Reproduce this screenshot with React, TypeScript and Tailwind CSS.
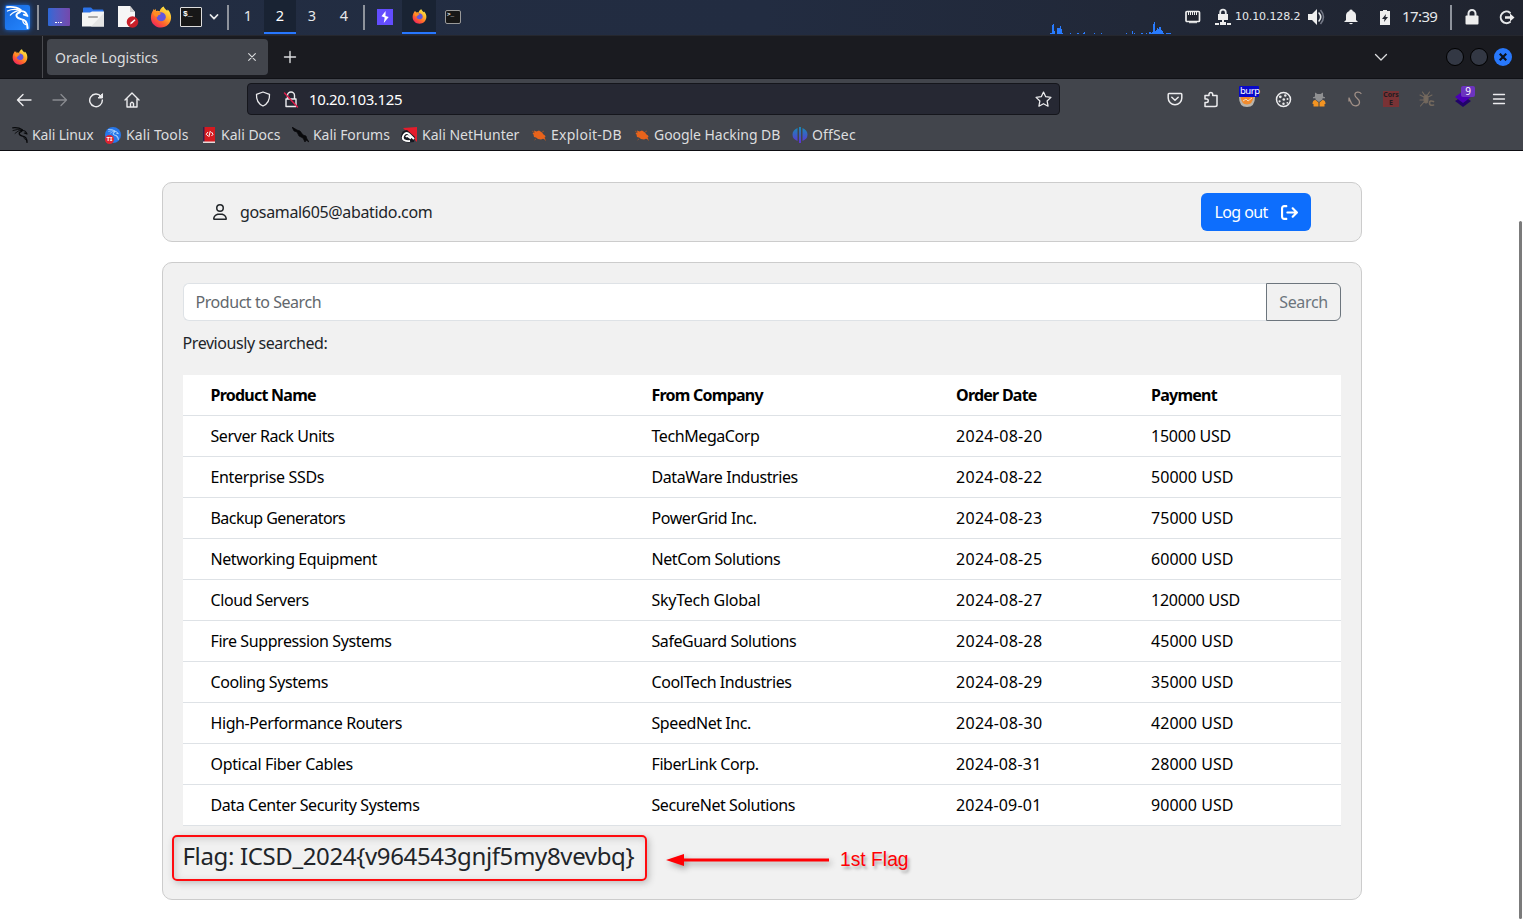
import React from "react";
import { FaRegUser, FaArrowRightFromBracket } from "react-icons/fa6";

type CellProps = { w: string; children?: React.ReactNode; className?: string };

/** Fixed-width, centred slot used by the desktop panel and the toolbars. */
function Cell({ w, children, className = "" }: CellProps) {
  return <div className={`flex h-full shrink-0 items-center justify-center ${w} ${className}`}>{children}</div>;
}

function Sep() {
  return <div className="h-[25px] w-[2px] shrink-0 bg-[#8e939c]" />;
}

function Dragon({ size, color }: { size: number; color: string }) {
  return (
    <svg width={size} height={size} viewBox="0 0 24 24" fill="none" stroke={color} strokeLinecap="round" strokeLinejoin="round">
      <path d="M1 1.200Q10 .2 15.500 4.200" strokeWidth="1.800" />
      <path d="M1.500 5.200Q8 2.500 14.500 4.500M4.500 9.500Q8.500 5 15 4.800" strokeWidth="1.300" />
      <path d="M14 5.500q5-1 7 2.300l1.500 2.700-4-1.500" strokeWidth="1.800" />
      <path d="M14.500 6.500Q9.500 8 11.500 11.500c1.500 2.800 6.500 1.500 9 4.500q2 3 2 7" strokeWidth="2.100" />
      <path d="M17.500 15q0 3 3.500 4.500" strokeWidth="1.200" />
    </svg>
  );
}

function Firefox({ size }: { size: number }) {
  return (
    <svg width={size} height={size} viewBox="0 0 24 24">
      <defs>
        <linearGradient id="fox" x1="0.85" y1="0.05" x2="0.2" y2="0.95">
          <stop offset="0" stopColor="#fff04a" />
          <stop offset="0.35" stopColor="#ffb32c" />
          <stop offset="0.65" stopColor="#ff6a2a" />
          <stop offset="1" stopColor="#f2235c" />
        </linearGradient>
      </defs>
      <path d="M15 .5c.5 2 2 3 3.800 4.800l.5-1.500c2.500 2.500 4 5.700 3.700 9.400C22.600 19.300 18 23.500 12 23.500S1 19 1 12.700C1 9.500 2 7 3.300 5l.6-1.700.9 1.400L6 3l.6 2.500q2-.8 4 .2C11 3.500 12.500 1.500 15 .5z" fill="url(#fox)" />
      <path d="M8.500 8.500q2-2.500 5-1.500 4 1.500 3.700 5.200c-.3 3-2.700 4.300-5.200 4.300-3 0-4.800-2-4.800-4.500z" fill="#6256dd" />
      <path d="M3.500 8q2-3 5.500-1.700l3 2.200q-1 1.500-3 1.700L8 12l-3-1z" fill="#ff8c22" />
    </svg>
  );
}

const line = { fill: "none", stroke: "currentColor", strokeLinecap: "round", strokeLinejoin: "round" } as const;

const spikes = [
  [0, 1], [1, 1], [2, 9], [3, 10], [4, 3], [7, 6], [8, 6], [9, 6], [10, 8], [11, 5], [12, 1], [20, 1],
  [27, 1], [28, 1], [33, 1], [34, 2], [44, 1], [51, 1], [76, 1], [82, 3], [84, 1], [91, 1], [92, 1],
  [96, 1], [99, 2], [100, 2], [101, 1], [102, 2], [103, 10], [104, 12], [105, 3], [106, 4], [107, 6], [108, 5],
  [109, 7], [110, 7], [111, 4], [112, 3], [113, 1], [116, 1], [117, 1], [118, 1], [119, 1], [120, 1],
];

function Panel() {
  return (
    <div className="flex h-[35px] w-full shrink-0 items-center bg-linear-to-r from-[#222d42] via-[#222c41] to-[#20242f] pb-px text-[#e6e8ea]">
      <Cell w="w-[37px]" className="pr-[3px]">
        <div className="flex size-[25px] items-center justify-center rounded-[2px] bg-linear-to-br from-[#1768de] to-[#2587ff] shadow-[0_0_5px_#176be0]">
          <Dragon size={23} color="#fff" />
        </div>
      </Cell>
      <Sep />
      <Cell w="w-[41px]" className="pr-[2px]">
        <div className="flex h-[18px] w-[22px] items-end justify-center gap-px rounded-[1px] bg-linear-to-r from-[#2c68d6] to-[#7448ac] pb-[3px]">
          <i className="size-[1.5px] bg-white" /><i className="size-[1.5px] bg-white" /><i className="size-[1.5px] bg-white" />
        </div>
      </Cell>
      <Cell w="w-[26px]">
        <svg width="22" height="20" viewBox="0 0 22 20">
          <path d="M1 1.500Q1 .5 2 .5h7l2 2h9.500q1 0 1 1V7H1z" fill="#2b72e8" />
          <path d="M0 5.500h8l2-1h12v15H0z" fill="#f4f4f4" /><path d="M22 6v13.500H9z" fill="#e4e4e4" />
          <rect x="6" y="9" width="10" height="2" rx="1" fill="#aaa" />
        </svg>
      </Cell>
      <Cell w="w-[43px]" className="pl-[1px]">
        <svg width="22" height="22" viewBox="0 0 22 22">
          <path d="M1 0h12l5 6v15H1z" fill="#f6f6f6" /><path d="M13 0v6h5z" fill="#ccc" />
          <circle cx="15.500" cy="16" r="5.800" fill="#c9202a" /><path d="m13 18.500 1-2.200 3.500-3 1 1-3.500 3.200z" fill="#fff" />
        </svg>
      </Cell>
      <Cell w="w-[25px]" className="pr-[2px]"><Firefox size={22} /></Cell>
      <Cell w="w-[34px]">
        <div className="h-[20px] w-[22px] rounded-[1px] border border-[#ddd] bg-[#171717] pl-[2px] font-['Liberation_Mono',monospace] text-[8px] leading-[12px] font-bold text-white">$_</div>
      </Cell>
      <Cell w="w-[12px]">
        <svg width="10" height="10" viewBox="0 0 10 10" {...line} strokeWidth="1.800"><path d="m1.500 3 3.500 3.700L8.500 3" /></svg>
      </Cell>
      <Cell w="w-[7px]" />
      <Sep />
      <Cell w="w-[3px]" />
      {["1", "2", "3", "4"].map((n) => (
        <Cell key={n} w="w-[32px]" className={`text-[14.500px] ${n === "2" ? "border-b-2 border-[#2777ff] bg-[#192333] text-white" : "pb-[2px]"}`}>{n}</Cell>
      ))}
      <Cell w="w-[3px]" />
      <Sep />
      <Cell w="w-[3px]" />
      <Cell w="w-[34px]">
        <div className="flex size-4 items-center justify-center bg-[#634dff]">
          <svg width="10" height="14" viewBox="0 0 10 14"><path d="M5.600 1 1.500 6.300l3.200 1.200L3.800 13l4.900-6-3.200-1z" fill="#fff" /></svg>
        </div>
      </Cell>
      <Cell w="w-[34px]" className="border-b-2 border-[#2777ff] bg-[#192333] pt-[1px]"><Firefox size={15} /></Cell>
      <Cell w="w-[34px]">
        <div className="h-[14px] w-[16px] rounded-[2px] border border-[#999] bg-[#171717] pl-[1px] font-['Liberation_Mono',monospace] text-[6px] leading-[7px] font-bold text-white">&gt;_</div>
      </Cell>
      <div className="flex-1" />
      <svg className="self-end" width="122" height="14" viewBox="0 0 122 14">
        {spikes.map(([x, h]) => <rect key={x} x={x} y={14 - h} width="1" height={h} fill="#287bff" />)}
      </svg>
      <Cell w="w-[41px]">
        <svg width="16" height="14" viewBox="0 0 16 14"><rect x="1" y="1.500" width="13.500" height="10" rx="1" fill="#20242f" stroke="#eee" strokeWidth="1.700" /><path d="M3.500 2v3M5.500 2v3M7.500 2v3M9.500 2v3M11.500 2v3M4 12.700h8" stroke="#eee" /></svg>
      </Cell>
      <Cell w="w-[20px]">
        <svg width="16" height="18" viewBox="0 0 16 18"><path d="M5.200 7V4.500a2.800 2.800 0 0 1 5.600 0V7" {...line} strokeWidth="1.800" /><path d="M3 6h10v6H3zM0 15h4v2H0zM5 14h2v-2h2v2h2v3H5zM12 15h4v2h-4z" fill="#eee" /></svg>
      </Cell>
      <div className="ml-[2px] w-[66px] shrink-0 font-['DejaVu_Sans',sans-serif] text-[11px] tracking-[-0.1px]">10.10.128.2</div>
      <Cell w="w-[32px]" className="pr-px">
        <svg width="17" height="18" viewBox="0 0 17 18"><path d="M0 6h4l5-5v16l-5-5H0z" fill="#eee" /><path d="M11 5q3.500 4 0 8" {...line} strokeWidth="1.600" /><path d="M12.500 2q6 7 0 14" fill="none" stroke="#747986" strokeWidth="1.500" /></svg>
      </Cell>
      <Cell w="w-[36px]">
        <svg width="16" height="16" viewBox="0 0 16 16"><path d="M1 13h14l-2-2V6.500Q13 3 9.500 2V1Q8 0 6.500 1v1Q3 3 3 6.500V11zM6 14h4q-2 2.500-4 0" fill="#eee" /></svg>
      </Cell>
      <Cell w="w-[32px]">
        <svg width="10" height="15" viewBox="0 0 10 15"><path d="M3 0h4v1h3v14H0V1h3z" fill="#eee" /><path d="M6 4 2 9h2.500L4 12l4-5H5.500z" fill="#20242f" /></svg>
      </Cell>
      <div className="ml-px w-[48px] shrink-0 pb-px text-[15px] tracking-[-0.6px]">17:39</div>
      <Sep />
      <Cell w="w-[40px]">
        <svg width="14" height="16" viewBox="0 0 14 16"><path d="M3.500 7V4.500a3.500 3.500 0 0 1 7 0V7" {...line} strokeWidth="2" /><rect y="6.500" x=".5" width="13" height="9" rx="1" fill="#eee" /></svg>
      </Cell>
      <Cell w="w-[31px]" className="pr-[2px]">
        <svg width="16" height="15" viewBox="0 0 16 15"><path d="M11 2.700A5.800 5.800 0 1 0 11 12" {...line} strokeWidth="2" /><path d="M6 6.300h5V3.500l4.500 4-4.500 4V8.700H6z" fill="#eee" /></svg>
      </Cell>
    </div>
  );
}

function TabStrip() {
  return (
    <div className="flex h-[44px] w-full shrink-0 items-center border-t border-b border-t-[#25272e] border-b-[#101116] bg-[#1a1b20] text-[#dcdddf]">
      <Cell w="w-[42px]" className="pr-[2px]"><Firefox size={16} /></Cell>
      <div className="h-full w-px bg-[#4a4b50]" />
      <div className="ml-1 flex h-[36px] w-[221px] items-center justify-between rounded-[4px] bg-[#42454c] pr-[11px] pl-2">
        <span className="text-[14px]">Oracle Logistics</span>
        <svg width="10" height="10" viewBox="0 0 12 12" {...line} strokeWidth="1.300"><path d="m2 2 8 8M10 2l-8 8" /></svg>
      </div>
      <Cell w="w-[43px]"><svg width="14" height="14" viewBox="0 0 14 14" {...line} strokeWidth="1.400"><path d="M7 1.500v11M1.500 7h11" /></svg></Cell>
      <div className="flex-1" />
      <Cell w="w-[16px]"><svg width="14" height="14" viewBox="0 0 14 14" {...line} strokeWidth="1.300"><path d="m1.500 4.500 5.500 5.500 5.500-5.500" /></svg></Cell>
      <div className="mr-[11px] ml-[57px] flex gap-[6px]">
        <div className="size-[18px] rounded-full border border-black bg-[#333844]" />
        <div className="size-[18px] rounded-full border border-black bg-[#333844]" />
        <div className="flex size-[18px] items-center justify-center rounded-full bg-[#2878fb]">
          <svg width="8" height="8" viewBox="0 0 8 8" stroke="#0d121c" strokeWidth="2.200"><path d="m.7.7 6.600 6.600M7.300.7.700 7.300" /></svg>
        </div>
      </div>
    </div>
  );
}

function Toolbar() {
  return (
    <div className="flex h-[40px] w-full shrink-0 items-center bg-[#42454c] text-[#ececee]">
      <Cell w="w-[6px]" />
      <Cell w="w-[36px]"><svg className="mt-px" width="16" height="16" viewBox="0 0 16 16" {...line} strokeWidth="1.400"><path d="M15 8H1.500M7 2.500 1.500 8 7 13.500" /></svg></Cell>
      <Cell w="w-[36px]" className="text-[#898b90]"><svg className="mt-px" width="16" height="16" viewBox="0 0 16 16" {...line} strokeWidth="1.300"><path d="M1 8h13.500M9 2.500 14.500 8 9 13.500" /></svg></Cell>
      <Cell w="w-[36px]"><svg className="mt-px" width="16" height="16" viewBox="0 0 16 16" {...line} strokeWidth="1.400"><path d="M13 4.500A6.300 6.300 0 1 0 14.300 8" /><path d="M14.500 2v4h-4z" fill="currentColor" strokeWidth="1" /></svg></Cell>
      <Cell w="w-[36px]" className="pr-px"><svg className="mt-px" width="16" height="16" viewBox="0 0 16 16" {...line} strokeWidth="1.400"><path d="m1 8 7-7 7 7M3 7v8h10V7M6.500 15v-3.500q1.500-2.500 3 0V15" /></svg></Cell>
      <div className="ml-[97px] flex h-[32px] w-[813px] items-center rounded-[4px] border border-[#15161c] bg-[#262833] px-[7px]">
        <svg width="16" height="16" viewBox="0 0 16 16" {...line} strokeWidth="1.300"><path d="M8 1 1.500 3.300Q1 12 8 15q7-3 6.500-11.700z" /></svg>
        <svg className="ml-[12px]" width="16" height="17" viewBox="0 0 16 17" {...line} strokeWidth="1.400"><path d="M4.500 8V4.500a3.500 3.500 0 0 1 7 0V8M3 8h10v7.500H3z" /><path d="m1.500 2 13 14" stroke="#e21c4c" /></svg>
        <span className="ml-[10px] flex-1 text-[15px] tracking-[-0.36px] text-white">10.20.103.125</span>
        <svg width="17" height="17" viewBox="0 0 16 16" {...line} strokeWidth="1.200"><path d="m8 1 2.100 4.400 4.900.6-3.600 3.400.9 4.900L8 12l-4.300 2.300.9-4.900L1 6l4.900-.6z" /></svg>
      </div>
      <div className="flex-1" />
      <div className="mr-[6px] flex h-full">
        <Cell w="w-[36px]"><svg width="16" height="16" viewBox="0 0 16 16" {...line} strokeWidth="1.500"><path d="M2 2.500h12q.8 0 .8 1V7a6.800 6.800 0 0 1-13.600 0V3.500q0-1 .8-1zM4.800 6.300 8 9.300l3.200-3" /></svg></Cell>
        <Cell w="w-[36px]"><svg width="16" height="18" viewBox="0 0 16 18" {...line} strokeWidth="1.500"><path d="M2 16.500h10q2 0 2-1.500V5.500H9.700V4a1.900 1.900 0 0 0-3.700 0v1.500H2V9h1.500a1.700 1.700 0 0 1 0 3.500H2z" /></svg></Cell>
        <Cell w="w-[36px]" className="items-start pt-[7px] pl-[4px]">
          <div className="flex flex-col items-center">
            <div className="z-10 h-[11px] w-[20px] rounded-[1px] bg-[#0808ca] pl-px text-[9.500px] leading-[10px] tracking-[-0.5px] text-white">burp</div>
            <svg className="mr-[4px]" width="18" height="10" viewBox="0 0 18 10"><path d="M1 0h16q0 10-8 10T1 0" fill="#b8b4ac" /><path d="M2.500 0h13q-1 7.500-6.500 7.500T2.500 0" fill="#f18b2d" /><path d="m5 4 3-2 2 2 4-3" stroke="#f5d9b8" fill="none" /></svg>
          </div>
        </Cell>
        <Cell w="w-[36px]"><svg width="17" height="17" viewBox="0 0 17 17"><circle cx="8.500" cy="8.500" r="7" {...line} strokeWidth="1.500" /><g fill="#e7e7e7"><circle cx="5.300" cy="5.800" r="1.400" /><circle cx="10.300" cy="4.500" r="1.200" /><circle cx="4.600" cy="10.300" r="1.100" /><circle cx="8.800" cy="8.500" r="1.300" /><circle cx="12.500" cy="8" r="1" /><circle cx="8.500" cy="12.800" r="1.200" /><circle cx="12.300" cy="11.800" r=".9" /></g></svg></Cell>
        <Cell w="w-[36px]"><svg width="14" height="16" viewBox="0 0 14 16"><path d="M3 5.500V1.500L5.500 3h3L11 1.500v4l2 .8v1H1v-1zM3.500 7h7v1.500L7 11 3.500 8.500z" fill="#8f9092" /><path d="M3.500 9 6.500 11.500V15.500H1.500V13H.5q0-4 3-4M10.500 9l-3 2.500v4h5V13h1q0-4-3-4" fill="#f39422" /></svg></Cell>
        <Cell w="w-[36px]" className="text-[#a19087]"><svg width="14" height="16" viewBox="0 0 14 16" {...line} strokeWidth="1.300"><path d="M13 2.500Q12 1 9.500 1.200 6.500 1.600 7 4.500c.5 2.700 4.500 3 4.500 6.500 0 4.500-6 5-8 1.500L1 7v3" /></svg></Cell>
        <Cell w="w-[36px]"><div className="size-4 bg-[#793235] text-center text-[7px] leading-[8px] font-bold text-[#221c20]">Cors<br />E</div></Cell>
        <Cell w="w-[36px]" className="text-[#74695e]"><svg width="16" height="16" viewBox="0 0 16 16" {...line} strokeWidth="1.100"><ellipse cx="7" cy="8" rx="2" ry="4" fill="currentColor" /><path d="m5.500 4-2-3M8.500 4l2-3M5 6 1 4M9 6l4-2M5 9H1M5 11l-3.500 4" /><path d="M14.500 10.500q-4-1.500-4 1.500t4 2" strokeWidth="1.700" /></svg></Cell>
        <Cell w="w-[36px]" className="relative"><svg width="16" height="16" viewBox="0 0 16 16"><path d="m0 10 8-5 8 5-8 6z" fill="#210469" /><path d="m0 6 8-6 8 6-8 6z" fill="#4b00b4" /></svg><span className="absolute top-[7px] left-[16px] h-[11px] w-[14px] rounded-[2px] bg-[#6c34bf] text-center text-[10px] leading-[11px] text-white">9</span></Cell>
        <Cell w="w-[36px]"><svg width="14" height="14" viewBox="0 0 14 14" {...line} strokeWidth="1.300"><path d="M1.500 2.500h11M1.500 7h11M1.500 11.500h11" /></svg></Cell>
      </div>
    </div>
  );
}

function Label({ w, children }: { w: string; children: React.ReactNode }) {
  return <span className={`shrink-0 whitespace-nowrap text-[14px] ${w}`}>{children}</span>;
}

function ExploitIcon() {
  return <svg width="16" height="16" viewBox="0 0 16 16"><path d="M2.500 7.500 1.500 6l2-.5L3 3.500l2.500 1L8 3.500 11 5.500l1.500 2 1.500 1 .5 1.500-1 .5 1 2-2.500-.8-2 .8-3-.5-2-1.500L3 10z" fill="#e8631b" /><path d="m1 4 3 2M5 12l-1.500 1M11 5l2-1M13 12l2 1.500" stroke="#b8571f" strokeWidth=".7" /></svg>;
}

function Bookmarks() {
  return (
    <div className="flex h-[32px] w-full shrink-0 items-center border-b border-[#0d0d12] bg-[#42454c] pl-[12px] text-[#dcdddf]">
      <Cell w="w-[20px]" className="justify-start"><Dragon size={16} color="#08090b" /></Cell>
      <Label w="w-[73px] tracking-[-0.15px]">Kali Linux</Label>
      <Cell w="w-[21px]" className="justify-start">
        <div className="relative flex size-4 items-center justify-center rounded-full bg-[#2777ea]"><Dragon size={11} color="#b5d9ff" /><i className="absolute bottom-[-1px] left-0 flex size-[9px] items-center justify-center rounded-full bg-[#df2430] text-[6px] leading-none font-bold text-white not-italic">TI</i></div>
      </Cell>
      <Label w="w-[75px] tracking-[0.1px]">Kali Tools</Label>
      <Cell w="w-[20px]" className="justify-start">
        <svg width="16" height="16" viewBox="0 0 16 16"><path d="M2 0h12v16H2z" fill="#d51a20" /><path d="M2 0h1.500v15H2z" fill="#35204b" /><path d="M2 14.500h12V16H2z" fill="#e6dada" /><path d="M7 5 5.200 7.300 7 9M10.500 5l1.500 2.300L10.500 9M9.300 4l-1.500 6" stroke="#fff" fill="none" /></svg>
      </Cell>
      <Label w="w-[71px]">Kali Docs</Label>
      <Cell w="w-[21px]" className="justify-start"><svg width="17" height="16" viewBox="0 0 17 16"><path d="m0 0 5 3 3 1 3 4 3 1 1 3 2 3-3-2-1 2-2-4-4-2-2-4-3-1z" fill="#08090b" stroke="#08090b" strokeWidth=".7" /></svg></Cell>
      <Label w="w-[88px] tracking-[-0.05px]">Kali Forums</Label>
      <Cell w="w-[21px]" className="justify-start"><svg width="16" height="16" viewBox="0 0 16 16"><path d="m2 1 14-1v15L5 4z" fill="#e51c2b" /><path d="M0 9Q1 3 6 3l8 7-1 5-5 .5Q0 15 0 9" fill="#151820" /><path d="M13 12 8.500 7.500Q5.500 4.500 3 7.500q-2.500 3.500 0 5.500 2.500 1.500 6 1M5 10q1-2 3 0l2 1.500" fill="none" stroke="#fff" strokeWidth="1.900" /></svg></Cell>
      <Label w="w-[109px]">Kali NetHunter</Label>
      <Cell w="w-[20px]" className="justify-start"><ExploitIcon /></Cell>
      <Label w="w-[83px] tracking-[0.25px]">Exploit-DB</Label>
      <Cell w="w-[20px]" className="justify-start"><ExploitIcon /></Cell>
      <Label w="w-[138px] tracking-[-0.05px]">Google Hacking DB</Label>
      <Cell w="w-[20px]" className="justify-start"><svg width="16" height="16" viewBox="0 0 16 16"><defs><linearGradient id="offsec" gradientUnits="userSpaceOnUse" x1="0" y1="0" x2="0" y2="16"><stop stopColor="#188bb5" /><stop offset="1" stopColor="#6031d6" /></linearGradient></defs><path d="M5.500 1v13Q.5 12 .5 7.500T5.500 1M7 0h2v16H7zM10.500 1q5 2 5 6.500t-5 6.500z" fill="url(#offsec)" /></svg></Cell>
      <Label w="w-[60px] tracking-[0.15px]">OffSec</Label>
    </div>
  );
}

const rows = [
  ["Server Rack Units", "TechMegaCorp", "2024-08-20", "15000 USD"],
  ["Enterprise SSDs", "DataWare Industries", "2024-08-22", "50000 USD"],
  ["Backup Generators", "PowerGrid Inc.", "2024-08-23", "75000 USD"],
  ["Networking Equipment", "NetCom Solutions", "2024-08-25", "60000 USD"],
  ["Cloud Servers", "SkyTech Global", "2024-08-27", "120000 USD"],
  ["Fire Suppression Systems", "SafeGuard Solutions", "2024-08-28", "45000 USD"],
  ["Cooling Systems", "CoolTech Industries", "2024-08-29", "35000 USD"],
  ["High-Performance Routers", "SpeedNet Inc.", "2024-08-30", "42000 USD"],
  ["Optical Fiber Cables", "FiberLink Corp.", "2024-08-31", "28000 USD"],
  ["Data Center Security Systems", "SecureNet Solutions", "2024-09-01", "90000 USD"],
];

const bodyTracking = ["tracking-[-0.41px]", "tracking-[-0.42px]", "tracking-[0.29px]", "tracking-[0.04px]"];

function tracking(text: string, column: number) {
  if (text.startsWith("1") && text.endsWith("USD")) return "tracking-[-0.23px]";
  if (text.endsWith("1") && column === 2) return "tracking-[0.2px]";
  if (text === "Enterprise SSDs" || text === "Optical Fiber Cables") return "tracking-[-0.33px]";
  if (text === "Backup Generators") return "tracking-[-0.55px]";
  if (text === "SkyTech Global") return "tracking-[-0.25px]";
  return bodyTracking[column];
}

function Row({ cells, head = false }: { cells: string[]; head?: boolean }) {
  return (
    <div className={`grid h-[41px] grid-cols-[441px_304.500px_195px_1fr] items-center border-b border-[#dee2e6] bg-white pl-[27.500px] text-black ${head ? "font-bold" : ""}`}>
      {cells.map((c, i) => <span key={c} className={head ? "tracking-[-0.76px]" : tracking(c, i)}>{c}</span>)}
    </div>
  );
}

export default function App() {
  return (
    <div className="flex h-[920px] w-[1523px] flex-col overflow-hidden bg-white font-['Noto_Sans',sans-serif]">
      <Panel />
      <TabStrip />
      <Toolbar />
      <Bookmarks />
      <main className="relative flex min-h-0 flex-1 flex-col pt-[31px] pl-[162px] text-[16px] text-[#212529]">
        <header className="flex h-[60px] w-[1200px] shrink-0 items-center rounded-[10px] border border-[#ccc] bg-[#f1f1f1] pr-[50px] pl-[48.500px]">
          <FaRegUser size={16} />
          <span className="ml-[12.500px] flex-1 tracking-[-0.34px]">gosamal605@abatido.com</span>
          <button className="flex h-[38px] w-[110px] items-center justify-between rounded-[6px] bg-[#0d6efd] pr-[13px] pl-[13.500px] tracking-[-0.6px] text-white">Log out<FaArrowRightFromBracket size={17} /></button>
        </header>
        <section className="mt-5 h-[638px] w-[1200px] shrink-0 rounded-[10px] border border-[#ccc] bg-[#f1f1f1] px-5 pt-5">
          <div className="flex h-[38px]">
            <div className="flex flex-1 items-center rounded-l-[6px] border border-r-0 border-[#dee2e6] bg-white pl-[11.500px] tracking-[-0.45px] text-[#62676c]">Product to Search</div>
            <button className="w-[75px] rounded-r-[6px] border border-[#6c757d] tracking-[-0.35px] text-[#6c757d]">Search</button>
          </div>
          <p className="mt-[10px] mb-[20px] -ml-[0.5px] leading-6 tracking-[-0.42px]">Previously searched:</p>
          <div>
            <Row head cells={["Product Name", "From Company", "Order Date", "Payment"]} />
            {rows.map((r) => <Row key={r[0]} cells={r} />)}
          </div>
          <div className="mt-[9px] -ml-[11px] flex items-center">
            <div className="flex h-[46px] w-[475px] items-center rounded-[5px] border-2 border-[#ff0b0f] pb-[4px] pl-[8.500px] text-[24px] tracking-[-0.36px] whitespace-nowrap shadow-[2px_2px_7px_#bbb,inset_2px_2px_7px_#ccc]">Flag: ICSD_2024&#123;v964543gnjf5my8vevbq&#125;</div>
            <svg className="mt-[3px] ml-[19px] drop-shadow-[2px_3px_3px_#999]" width="163" height="14" viewBox="0 0 163 14"><path d="M0 7 18 1v4.500h145v3H18V13z" fill="#ff0004" /></svg>
            <span className="mt-[5px] ml-[11px] font-['Liberation_Sans',Arial,sans-serif] text-[19.300px] text-[#ff0004] [text-shadow:2px_3px_3px_#aaa]">1st Flag</span>
          </div>
        </section>
        <div className="absolute top-[70px] right-px h-[698px] w-[3px] rounded-full bg-[#7b7b7b]" />
      </main>
    </div>
  );
}
